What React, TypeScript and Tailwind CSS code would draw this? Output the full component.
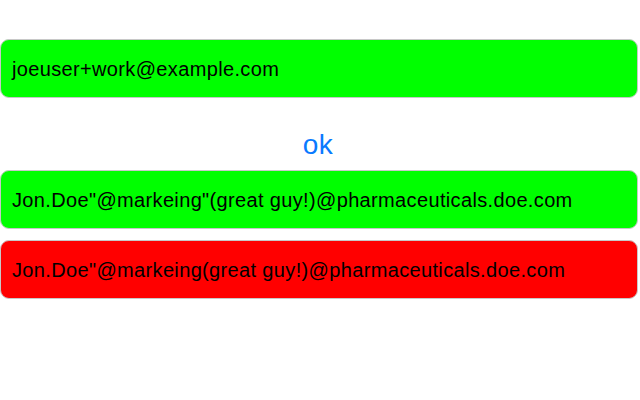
import React from 'react';

const rows = [
  { text: 'joeuser+work@example.com', ok: true },
  { text: 'Jon.Doe"@markeing"(great guy!)@pharmaceuticals.doe.com', ok: true },
  { text: 'Jon.Doe"@markeing(great guy!)@pharmaceuticals.doe.com', ok: false },
];

function EmailRow({ text, ok }: { text: string; ok: boolean }) {
  return (
    <div
      className={`w-[638px] h-[59px] flex items-center pl-[11px] pr-3 rounded-[9px] border border-[#c8c8c8] text-[20px] tracking-[0.35px] text-black ${
        ok ? 'bg-[#00ff00]' : 'bg-[#ff0000]'
      }`}
    >
      {text}
    </div>
  );
}

export default function App() {
  return (
    <div className="w-[640px] h-[400px] bg-white pt-[39px] flex flex-col" style={{ fontFamily: '"Liberation Sans", Arial, sans-serif' }}>
      <EmailRow {...rows[0]} />
      <div className="h-[72px] flex items-end justify-center pb-[11px]">
        <span className="text-[28px] tracking-[0.5px] text-[#0a7aff] leading-none pr-[4px]">ok</span>
      </div>
      <div className="flex flex-col gap-[11px]">
        <EmailRow {...rows[1]} />
        <EmailRow {...rows[2]} />
      </div>
    </div>
  );
}
